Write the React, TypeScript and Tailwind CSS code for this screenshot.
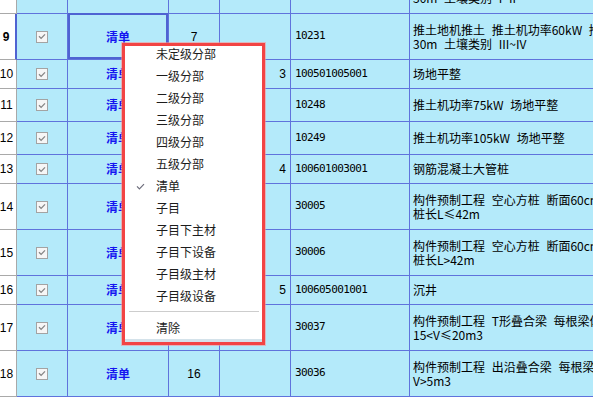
import type { ReactNode } from 'react'

interface Row {
  no: number
  h: number
  qty?: string
  lvl?: string
  code: string
  desc: string[]
}

const ROWS: Row[] = [
  { no: 9, h: 46, qty: '7', code: '10231', desc: ['推土地机推土 推土机功率60kW 推土距离', '30m 土壤类别 III~IV'] },
  { no: 10, h: 29, lvl: '3', code: '100501005001', desc: ['场地平整'] },
  { no: 11, h: 33, code: '10248', desc: ['推土机功率75kW 场地平整'] },
  { no: 12, h: 33, code: '10249', desc: ['推土机功率105kW 场地平整'] },
  { no: 13, h: 29, lvl: '4', code: '100601003001', desc: ['钢筋混凝土大管桩'] },
  { no: 14, h: 46, code: '30005', desc: ['构件预制工程 空心方桩 断面60cm以内', '桩长L≤42m'] },
  { no: 15, h: 46, code: '30006', desc: ['构件预制工程 空心方桩 断面60cm以内', '桩长L>42m'] },
  { no: 16, h: 29, lvl: '5', code: '100605001001', desc: ['沉井'] },
  { no: 17, h: 46, code: '30037', desc: ['构件预制工程 T形叠合梁 每根梁体积', '15<V≤20m3'] },
  { no: 18, h: 46, qty: '16', code: '30036', desc: ['构件预制工程 出沿叠合梁 每根梁体积', 'V>5m3'] },
]

const MENU_ITEMS = [
  '未定级分部',
  '一级分部',
  '二级分部',
  '三级分部',
  '四级分部',
  '五级分部',
  '清单',
  '子目',
  '子目下主材',
  '子目下设备',
  '子目级主材',
  '子目级设备',
]

const CJK = "font-['Noto_Sans_CJK_SC','Noto_Sans',sans-serif]"
const GRID = 'border-[#5f73dc]'

function Check() {
  return (
    <span className="w-[12px] h-[12px] border border-[#a3a3a3] bg-[#f6f6f6] flex items-center justify-center">
      <svg width="8" height="7" viewBox="0 0 8 7">
        <path d="M1 3.3 L3.1 5.4 L7 1.4" stroke="#858585" strokeWidth="1.3" fill="none" />
      </svg>
    </span>
  )
}

function Cell({ w, children, className = '' }: { w: string; children?: ReactNode; className?: string }) {
  return (
    <div className={`${w} shrink-0 h-full border-r border-b ${GRID} flex items-center ${className}`}>
      {children}
    </div>
  )
}

function TableRow({ row, selected }: { row: Row; selected?: boolean }) {
  return (
    <div className="flex" style={{ height: row.h }}>
      <div
        className={`w-[17px] shrink-0 h-full bg-white border-b border-r border-[#a9a9a9] flex items-center justify-center pr-[3px] text-[12px] text-black font-['Liberation_Sans',sans-serif] ${
          selected ? 'font-bold border-r-2 border-r-[#4f63d2]' : ''
        }`}
      >
        {row.no}
      </div>
      <Cell w="w-[51px]" className="justify-center">
        <Check />
      </Cell>
      <Cell w="w-[101px]" className="justify-center relative">
        <span className={`${CJK} text-[12px] font-bold text-[#1414f0]`}>清单</span>
        {selected && <div className="absolute -top-px left-0 right-0 bottom-0 border-2 border-[#4f63d2]" />}
      </Cell>
      <Cell w="w-[51px]" className="justify-center text-[12px] text-black font-['Liberation_Sans',sans-serif]">
        {row.qty}
      </Cell>
      <Cell w="w-[71px]" className="justify-end pr-[4px] text-[12px] text-black font-['Liberation_Sans',sans-serif]">
        {row.lvl}
      </Cell>
      <Cell w="w-[119px]" className="pl-[4px] text-[11px] tracking-[-0.6px] text-black font-['DejaVu_Sans_Mono',monospace]">
        {row.code}
      </Cell>
      <div className={`flex-1 min-w-0 h-full border-b ${GRID} flex flex-col justify-center pl-[3px] overflow-hidden`}>
        {row.desc.map((line) => (
          <div
            key={line}
            className={`${CJK} text-[12px] leading-[14px] text-black whitespace-nowrap [word-spacing:4px]`}
          >
            {line}
          </div>
        ))}
      </div>
    </div>
  )
}

function ContextMenu() {
  return (
    <div className="absolute left-[122px] top-[43px] w-[143px] border-[3px] border-[#f24444] bg-white shadow-[0_0_0_1px_rgba(255,140,140,0.55)]">
      <div className="-mt-[3px]">
        {MENU_ITEMS.map((label) => (
          <div key={label} className="h-[22px] flex items-center">
            <span className="w-[31px] shrink-0 pl-[11px] flex items-center">
              {label === '清单' && (
                <svg width="9" height="7" viewBox="0 0 9 7">
                  <path d="M1 3.4 L3.4 5.8 L8 1.2" stroke="#6e6e7c" strokeWidth="1.2" fill="none" />
                </svg>
              )}
            </span>
            <span className={`${CJK} text-[12px] text-[#1c1c1c]`}>{label}</span>
          </div>
        ))}
      </div>
      <div className="mt-[4px] ml-[4px] mr-[3px] h-px bg-[#cdcdcd]" />
      <div className="mt-[5px] h-[22px] flex items-center pl-[31px]">
        <span className={`${CJK} text-[12px] text-[#1c1c1c]`}>清除</span>
      </div>
      <div className="h-[3px] bg-[#d4e2ea]" />
    </div>
  )
}

export default function App() {
  const prev: Row = { no: 8, h: 46, qty: '6', code: '10230', desc: ['推土地机推土 推土机功率60kW 推土距离', '30m 土壤类别 I~II'] }

  return (
    <div className="relative w-[593px] h-[397px] overflow-hidden bg-[#b4eafa]">
      <div className="h-[14px] overflow-hidden">
        <div className="-mt-[32px]">
          <TableRow row={prev} />
        </div>
      </div>
      {ROWS.map((row) => (
        <TableRow key={row.no} row={row} selected={row.no === 9} />
      ))}
      <ContextMenu />
    </div>
  )
}
